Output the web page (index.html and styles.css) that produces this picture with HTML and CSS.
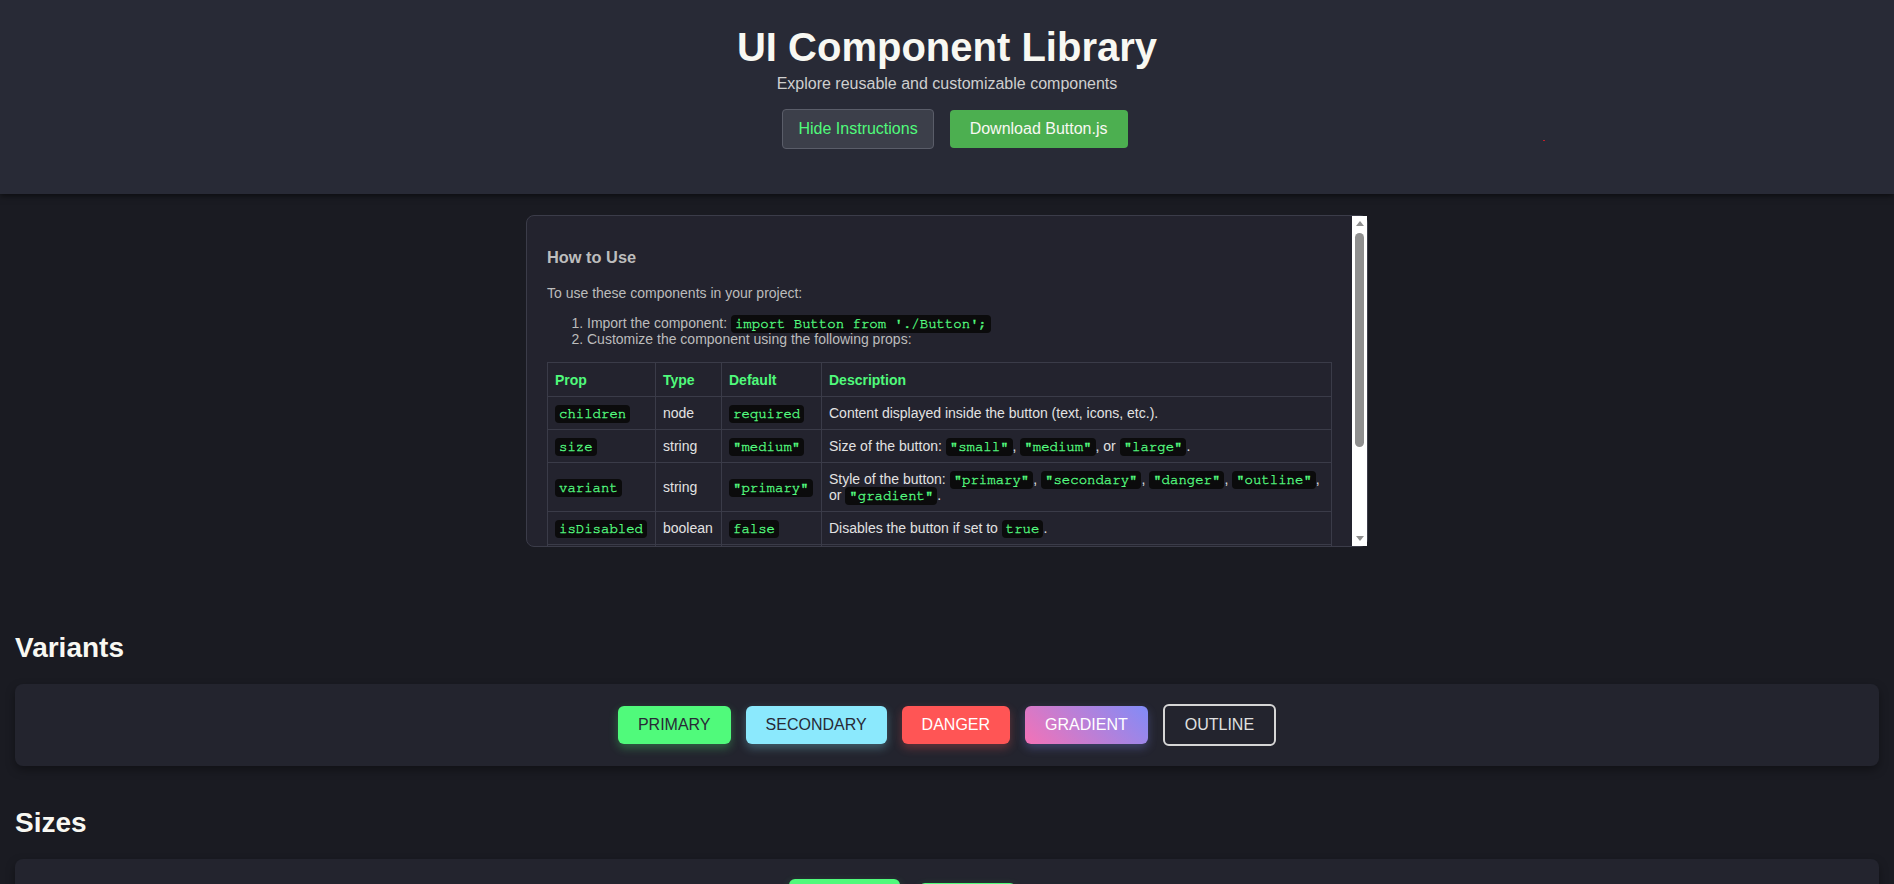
FILE: index.html
```html
<!DOCTYPE html>
<html lang="en">
<head>
<meta charset="utf-8">
<title>UI Component Library</title>
<link rel="stylesheet" href="styles.css">
</head>
<body>
<header class="header">
  <h1 class="title">UI Component Library</h1>
  <p class="subtitle">Explore reusable and customizable components</p>
  <div class="header-actions">
    <button class="btn-toggle">Hide Instructions</button>
    <button class="btn-download">Download Button.js</button>
  </div>
  <span class="stray-dot"></span>
</header>

<div class="instructions">
  <div class="instructions-body">
    <h3 class="instructions-title">How to Use</h3>
    <p class="instructions-text">To use these components in your project:</p>
    <ol class="instructions-list">
      <li>Import the component: <code class="chip">import Button from './Button';</code></li>
      <li>Customize the component using the following props:</li>
    </ol>
    <table class="props-table">
      <colgroup>
        <col class="col-prop"><col class="col-type"><col class="col-default"><col>
      </colgroup>
      <thead>
        <tr><th>Prop</th><th>Type</th><th>Default</th><th>Description</th></tr>
      </thead>
      <tbody>
        <tr><td><code class="chip">children</code></td><td>node</td><td><code class="chip">required</code></td><td>Content displayed inside the button (text, icons, etc.).</td></tr>
        <tr><td><code class="chip">size</code></td><td>string</td><td><code class="chip">"medium"</code></td><td>Size of the button: <code class="chip">"small"</code>, <code class="chip">"medium"</code>, or <code class="chip">"large"</code>.</td></tr>
        <tr><td><code class="chip">variant</code></td><td>string</td><td><code class="chip">"primary"</code></td><td>Style of the button: <code class="chip">"primary"</code>, <code class="chip">"secondary"</code>, <code class="chip">"danger"</code>, <code class="chip">"outline"</code>, or <code class="chip">"gradient"</code>.</td></tr>
        <tr><td><code class="chip">isDisabled</code></td><td>boolean</td><td><code class="chip">false</code></td><td>Disables the button if set to <code class="chip">true</code>.</td></tr>
        <tr><td><code class="chip">onClick</code></td><td>function</td><td><code class="chip">undefined</code></td><td>Function called when the button is clicked.</td></tr>
        <tr><td><code class="chip">className</code></td><td>string</td><td><code class="chip">""</code></td><td>Additional CSS classes applied to the button.</td></tr>
      </tbody>
    </table>
  </div>
  <div class="scrollbar" aria-hidden="true">
    <span class="sb-arrow sb-up"></span>
    <span class="sb-thumb"></span>
    <span class="sb-arrow sb-down"></span>
  </div>
</div>

<main class="content">
  <section class="showcase">
    <h2 class="showcase-title">Variants</h2>
    <div class="card">
      <button class="btn btn-primary">PRIMARY</button>
      <button class="btn btn-secondary">SECONDARY</button>
      <button class="btn btn-danger">DANGER</button>
      <button class="btn btn-gradient">GRADIENT</button>
      <button class="btn btn-outline">OUTLINE</button>
    </div>
  </section>
  <section class="showcase">
    <h2 class="showcase-title">Sizes</h2>
    <div class="card card-sizes">
      <button class="btn btn-primary btn-large">LARGE</button>
      <button class="btn btn-primary btn-medium">MEDIUM</button>
      <button class="btn btn-primary btn-small">SMALL</button>
    </div>
  </section>
</main>
</body>
</html>
```

FILE: styles.css
```css
* { box-sizing: border-box; }

body {
  margin: 0;
  background: #1a1b22;
  color: #f8f8f2;
  font-family: "Liberation Sans", Arial, sans-serif;
}

.header {
  position: relative;
  background: #282a36;
  text-align: center;
  padding: 24px 0 45px;
  box-shadow: 0 2px 6px rgba(0, 0, 0, 0.55);
}

.title {
  margin: 0;
  font-size: 40px;
  line-height: 46px;
  font-weight: bold;
  color: #f8f8f2;
}

.subtitle {
  margin: 5px 0 0;
  font-size: 16px;
  line-height: 18px;
  color: #cfcfcf;
}

.header-actions {
  display: flex;
  justify-content: center;
  align-items: center;
  margin-top: 16px;
}

.header-actions button {
  margin-left: 16px;
  font-family: "Liberation Sans", Arial, sans-serif;
  font-size: 16px;
  line-height: 18px;
  border-radius: 4px;
  cursor: pointer;
}

.btn-toggle {
  background: #3c3f4a;
  color: #50fa7b;
  border: 1px solid #5a5d69;
  padding: 10px 15px;
}

.btn-download {
  background: #4caf50;
  color: #f8f8f2;
  border: none;
  padding: 10px 20px;
}

.stray-dot {
  position: absolute;
  left: 1543px;
  top: 140px;
  width: 2px;
  height: 1px;
  background: #c0202a;
}

.instructions {
  display: flex;
  width: 842px;
  height: 332px;
  margin: 21px auto 0;
  background: #23232e;
  border: 1px solid #3b3c49;
  border-radius: 8px;
  font-size: 14px;
  color: #bcbcbc;
}

.instructions-body {
  flex: 1;
  min-width: 0;
  padding: 16px 20px;
  overflow: hidden;
}

.scrollbar {
  display: flex;
  flex-direction: column;
  align-items: center;
  width: 15px;
  background: #ffffff;
}

.sb-arrow {
  display: block;
  width: 0;
  height: 0;
  border-left: 4px solid transparent;
  border-right: 4px solid transparent;
}

.sb-up {
  margin-top: 5px;
  border-bottom: 5px solid #8f8f8f;
}

.sb-down {
  margin-top: auto;
  margin-bottom: 5px;
  border-top: 5px solid #8f8f8f;
}

.sb-thumb {
  display: block;
  width: 9px;
  height: 214px;
  margin-top: 7px;
  border-radius: 5px;
  background: #8f8f8f;
}

.instructions-title {
  margin: 16px 0 18px;
  font-size: 16.38px;
  font-weight: bold;
  color: #bdbdbd;
}

.instructions-text {
  margin: 0 0 14px;
}

.instructions-list {
  margin: 0 0 15px;
  padding-left: 40px;
}

.chip {
  font-family: "Nimbus Mono PS", "Nimbus Mono L", "FreeMono", "Courier New", "Liberation Mono", monospace;
  font-size: 14px;
  background: #0b0b0c;
  color: #55fb80;
  -webkit-text-stroke: 0.35px #55fb80;
  padding: 2px 4px;
  border-radius: 4px;
}

.props-table {
  width: 100%;
  border-collapse: collapse;
  color: #e2e2e2;
}

.col-prop { width: 108px; }
.col-type { width: 66px; }
.col-default { width: 100px; }

.props-table th,
.props-table td {
  border: 1px solid #3a3b48;
  padding: 8px 7px;
  text-align: left;
  vertical-align: middle;
}

.props-table th {
  color: #50fa7b;
  font-weight: bold;
  padding-top: 9px;
  padding-bottom: 8px;
}

.content {
  padding: 85px 15px 0;
}

.showcase {
  margin-bottom: 41px;
}

.showcase-title {
  margin: 0 0 20px;
  font-size: 28px;
  line-height: 32px;
  font-weight: bold;
  color: #f8f8f2;
}

.card {
  display: flex;
  justify-content: center;
  align-items: center;
  gap: 15px;
  padding: 20px;
  background: #23242e;
  border-radius: 8px;
  box-shadow: 0 4px 10px rgba(0, 0, 0, 0.35);
}

.card-sizes {
  gap: 19px;
}

.btn {
  font-family: "Liberation Sans", Arial, sans-serif;
  font-size: 16px;
  line-height: 18px;
  padding: 10px 20px;
  border: none;
  border-radius: 6px;
  cursor: pointer;
}

.btn-primary {
  background: #50fa7b;
  color: #282a36;
  box-shadow: 0 4px 10px rgba(80, 250, 123, 0.3);
}

.btn-secondary {
  background: #8be9fd;
  color: #282a36;
  box-shadow: 0 4px 10px rgba(139, 233, 253, 0.3);
}

.btn-danger {
  background: #ff5555;
  color: #ffffff;
  box-shadow: 0 4px 10px rgba(255, 85, 85, 0.3);
}

.btn-gradient {
  background: linear-gradient(45deg, #f472b6, #818cf8);
  color: #ffffff;
  box-shadow: 0 4px 10px rgba(129, 140, 248, 0.3);
}

.btn-outline {
  background: transparent;
  color: #e0e0e0;
  border: 2px solid #d6d6d6;
}

.btn-large {
  font-size: 18px;
  line-height: 21px;
  padding: 12px 25px;
}

.btn-medium {
  padding: 10px 16px;
}

.btn-small {
  font-size: 14px;
  line-height: 16px;
  padding: 6px 12px;
}
```
